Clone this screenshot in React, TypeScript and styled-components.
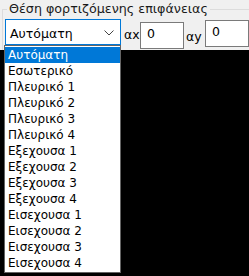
import styled, { createGlobalStyle } from 'styled-components';

const GlobalStyle = createGlobalStyle`
  html, body {
    margin: 0;
    padding: 0;
    background: #000000;
  }
  body {
    font-family: "DejaVu Sans", "Liberation Sans", sans-serif;
    font-size: 12px;
    color: #000000;
  }
`;

const Screen = styled.div`
  position: relative;
  width: 249px;
  height: 276px;
  overflow: hidden;
  background: #000000;
`;

const Panel = styled.div`
  height: 50px;
  background: #f0f0f0;
  padding: 1px 0 0 2px;
  box-sizing: border-box;
`;

const GroupBox = styled.fieldset`
  margin: 0;
  padding: 2px 0 0 2px;
  border: 1px solid #dcdcdc;
  border-right: none;
  border-bottom: none;
  height: 49px;
  box-sizing: border-box;
`;

const Legend = styled.legend`
  padding: 0 2px;
  margin-left: 2px;
  font-size: 12.7px;
  line-height: 16px;
  color: #1a1a1a;
`;

const Row = styled.div`
  display: flex;
  align-items: flex-start;
`;

const Combo = styled.div`
  width: 116px;
  height: 26px;
  box-sizing: border-box;
  border: 1px solid #0078d7;
  background: #ffffff;
  display: flex;
  align-items: center;
  justify-content: space-between;
  padding: 2px 6px 0 4px;
  font-size: 12.5px;
`;

const Label = styled.span<{ $top: number; $left: number; $w: number }>`
  margin: ${(p) => p.$top}px 0 0 ${(p) => p.$left}px;
  width: ${(p) => p.$w}px;
  font-size: 12.5px;
  white-space: nowrap;
`;

const NumberBox = styled.div<{ $top: number }>`
  margin-top: ${(p) => p.$top}px;
  width: 44px;
  height: 27px;
  box-sizing: border-box;
  border: 1px solid #7a7a7a;
  background: #ffffff;
  padding: 3px 0 0 6px;
  font-size: 12.5px;
`;

const List = styled.ul`
  position: absolute;
  top: 45px;
  left: 4px;
  width: 117px;
  margin: 0;
  padding: 1px 0;
  list-style: none;
  background: #ffffff;
  border: 1px solid #646464;
  box-sizing: border-box;
`;

const Item = styled.li<{ $active?: boolean }>`
  height: 16px;
  line-height: 16px;
  padding-left: 3px;
  font-size: 12px;
  background: ${(p) => (p.$active ? '#0078d7' : 'transparent')};
  color: ${(p) => (p.$active ? '#ffffff' : '#000000')};
  white-space: nowrap;
`;

const items = [
  'Αυτόματη',
  'Εσωτερικό',
  'Πλευρικό 1',
  'Πλευρικό 2',
  'Πλευρικό 3',
  'Πλευρικό 4',
  'Εξεχουσα 1',
  'Εξεχουσα 2',
  'Εξεχουσα 3',
  'Εξεχουσα 4',
  'Εισεχουσα 1',
  'Εισεχουσα 2',
  'Εισεχουσα 3',
  'Εισεχουσα 4',
];

const Chevron = () => (
  <svg width="10" height="6" viewBox="0 0 10 6">
    <path d="M0.5 0.5 L5 5 L9.5 0.5" fill="none" stroke="#444" strokeWidth="1" />
  </svg>
);

const App = () => {
  return (
    <Screen>
      <GlobalStyle />
      <Panel>
        <GroupBox>
          <Legend>Θέση φορτιζόμενης επιφάνειας</Legend>
          <Row>
            <Combo>
              <span>Αυτόματη</span>
              <Chevron />
            </Combo>
            <Label $top={8} $left={3} $w={16}>αx</Label>
            <NumberBox $top={3}>0</NumberBox>
            <Label $top={10} $left={2} $w={19}>αy</Label>
            <NumberBox $top={1}>0</NumberBox>
          </Row>
        </GroupBox>
      </Panel>
      <List>
        {items.map((t, i) => (
          <Item key={t} $active={i === 0}>
            {t}
          </Item>
        ))}
      </List>
    </Screen>
  );
};

export default App;
